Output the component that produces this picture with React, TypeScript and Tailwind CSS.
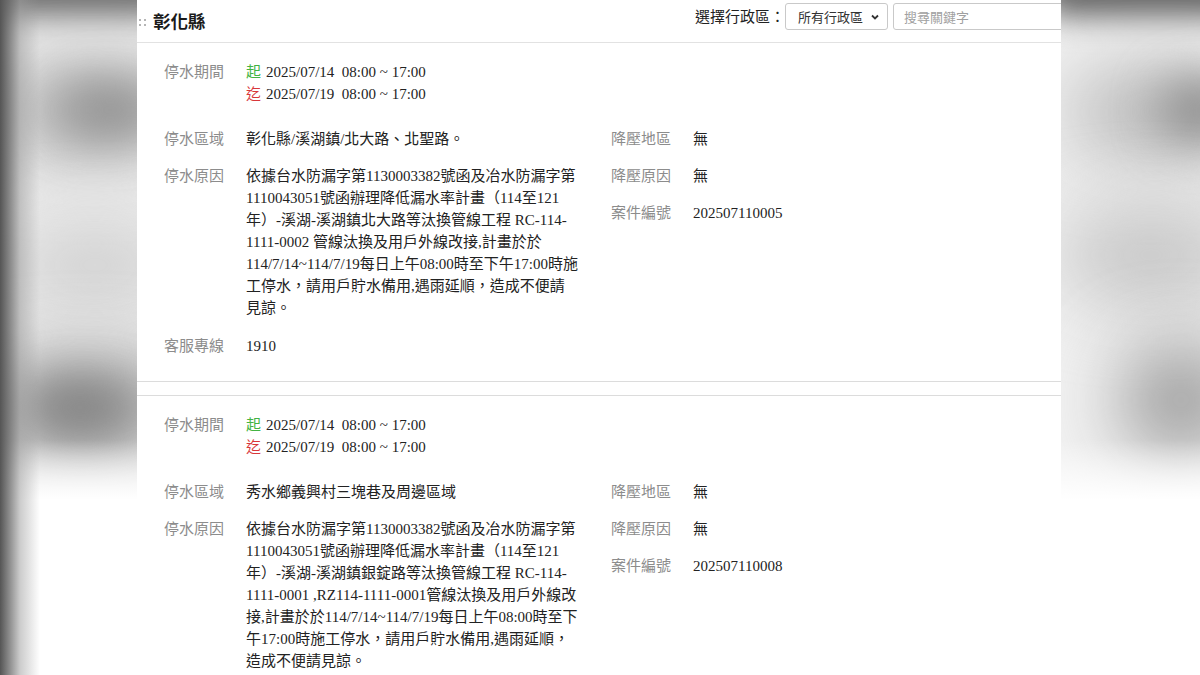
import React from "react";

type Notice = {
  area: string;
  reason: string[];
  hotline?: string;
  caseNo: string;
};

const notices: Notice[] = [
  {
    area: "彰化縣/溪湖鎮/北大路、北聖路。",
    reason: [
      "依據台水防漏字第1130003382號函及冶水防漏字第",
      "1110043051號函辦理降低漏水率計畫（114至121",
      "年）-溪湖-溪湖鎮北大路等汰換管線工程 RC-114-",
      "1111-0002 管線汰換及用戶外線改接,計畫於於",
      "114/7/14~114/7/19每日上午08:00時至下午17:00時施",
      "工停水，請用戶貯水備用,遇雨延順，造成不便請",
      "見諒。",
    ],
    hotline: "1910",
    caseNo: "202507110005",
  },
  {
    area: "秀水鄉義興村三塊巷及周邊區域",
    reason: [
      "依據台水防漏字第1130003382號函及冶水防漏字第",
      "1110043051號函辦理降低漏水率計畫（114至121",
      "年）-溪湖-溪湖鎮銀錠路等汰換管線工程 RC-114-",
      "1111-0001 ,RZ114-1111-0001管線汰換及用戶外線改",
      "接,計畫於於114/7/14~114/7/19每日上午08:00時至下",
      "午17:00時施工停水，請用戶貯水備用,遇雨延順，",
      "造成不便請見諒。",
    ],
    caseNo: "202507110008",
  },
];

function Row({
  label,
  className = "",
  children,
}: {
  label: string;
  className?: string;
  children: React.ReactNode;
}) {
  return (
    <div className={`flex leading-[22px] ${className}`}>
      <div className="w-[82px] shrink-0 text-[#8c8c8c]">{label}</div>
      <div className="text-[#222]">{children}</div>
    </div>
  );
}

function NoticeCard({ notice, first }: { notice: Notice; first?: boolean }) {
  return (
    <section
      className={`px-[27px] pt-[18px] pb-[24px] border-b border-[#dcdcdc] ${
        first ? "" : "mt-[13px] border-t"
      }`}
    >
      <Row label="停水期間">
        <div className="whitespace-pre">
          <span className="text-[#43b343]">起</span>
          <span className="ml-[5px]">2025/07/14  08:00 ~ 17:00</span>
        </div>
        <div className="whitespace-pre">
          <span className="text-[#d8363a]">迄</span>
          <span className="ml-[5px]">2025/07/19  08:00 ~ 17:00</span>
        </div>
      </Row>

      <div className="mt-[23px] flex">
        <div className="w-[447px] shrink-0">
          <Row label="停水區域">{notice.area}</Row>
          <Row label="停水原因" className="mt-[15px]">
            {notice.reason.map((line) => (
              <div key={line} className="whitespace-nowrap">
                {line}
              </div>
            ))}
          </Row>
          {notice.hotline && (
            <Row label="客服專線" className="mt-[16px]">
              {notice.hotline}
            </Row>
          )}
        </div>
        <div className="flex-1">
          <Row label="降壓地區">無</Row>
          <Row label="降壓原因" className="mt-[15px]">
            無
          </Row>
          <Row label="案件編號" className="mt-[15px]">
            {notice.caseNo}
          </Row>
        </div>
      </div>
    </section>
  );
}

// soft grey backdrop on both sides of the page column
function SideBackdrop({ side }: { side: "left" | "right" }) {
  if (side === "left") {
    return (
      <div className="relative h-full w-[137px] shrink-0 overflow-hidden bg-[#f1f1f1]">
        <div className="absolute -left-[20px] top-[-34px] h-[50px] w-[200px] rounded-full bg-[#6a6a6a] blur-lg" />
        <div className="absolute left-[0px] top-[70px] h-[80px] w-[180px] rounded-full bg-[#a6a6a6] blur-2xl" />
        <div className="absolute left-[60px] top-[85px] h-[50px] w-[100px] rounded-full bg-[#8e8e8e] blur-xl" />
        <div className="absolute left-[10px] top-[235px] h-[60px] w-[170px] rounded-full bg-[#c2c2c2] blur-2xl" />
        <div className="absolute left-[-10px] top-[365px] h-[85px] w-[190px] rounded-full bg-[#8c8c8c] blur-2xl" />
        <div className="absolute left-[30px] top-[385px] h-[45px] w-[100px] rounded-full bg-[#7d7d7d] blur-xl" />
        <div className="absolute left-0 top-[440px] h-[60px] w-full bg-gradient-to-b from-transparent to-white" />
        <div className="absolute left-0 top-[500px] h-[175px] w-full bg-white" />
        <div className="absolute left-0 top-0 h-full w-[40px] bg-gradient-to-r from-[#555] via-[#999]/50 to-transparent" />
      </div>
    );
  }
  return (
    <div className="relative h-full flex-1 overflow-hidden bg-[#f2f2f2]">
      <div className="absolute -left-[20px] top-[-32px] h-[48px] w-[220px] rounded-full bg-[#5e5e5e] blur-lg" />
      <div className="absolute left-[10px] top-[75px] h-[75px] w-[170px] rounded-full bg-[#ababab] blur-2xl" />
      <div className="absolute left-[100px] top-[80px] h-[60px] w-[80px] rounded-full bg-[#8a8a8a] blur-xl" />
      <div className="absolute left-[0px] top-[215px] h-[80px] w-[180px] rounded-full bg-[#bdbdbd] blur-2xl" />
      <div className="absolute left-[60px] top-[350px] h-[100px] w-[120px] rounded-full bg-[#8e8e8e] blur-2xl" />
      <div className="absolute left-0 top-[440px] h-[60px] w-full bg-gradient-to-b from-transparent to-white" />
      <div className="absolute left-0 top-[500px] h-[175px] w-full bg-white" />
    </div>
  );
}

export default function App() {
  return (
    <div className="flex h-[675px] w-[1200px] overflow-hidden bg-white font-['Liberation_Serif','Noto_Sans_CJK_TC',serif] text-[15px]">
      <SideBackdrop side="left" />

      <main className="h-full w-[924px] shrink-0 overflow-hidden bg-white">
        <header className="flex h-[43px] items-center border-b border-[#e2e2e2] pl-[2px]">
          <span className="mr-[7px] grid grid-cols-2 gap-[3px] pt-[2px]">
            <span className="h-[2px] w-[2px] bg-[#b5b5b5]" />
            <span className="h-[2px] w-[2px] bg-[#b5b5b5]" />
            <span className="h-[2px] w-[2px] bg-[#b5b5b5]" />
            <span className="h-[2px] w-[2px] bg-[#b5b5b5]" />
          </span>
          <h1 className="font-['Noto_Sans_CJK_TC',sans-serif] text-[17.5px] font-bold text-[#1a1a1a]">
            彰化縣
          </h1>

          <div className="-mr-[40px] ml-auto flex items-center self-start pt-[3px] font-['Noto_Sans_CJK_TC',sans-serif]">
            <span className="text-[15px] text-[#222]">選擇行政區：</span>
            <div className="flex h-[27px] w-[103px] items-center justify-between rounded-[3px] border border-[#c9c9c9] pl-[12px] pr-[7px] text-[13px] text-[#333]">
              <span>所有行政區</span>
              <svg width="10" height="10" viewBox="0 0 10 10">
                <path d="M2 3.5 L5 6.5 L8 3.5" fill="none" stroke="#333" strokeWidth="1.8" />
              </svg>
            </div>
            <div className="ml-[5px] flex h-[27px] w-[208px] items-center rounded-[3px] border border-[#c9c9c9] pl-[10px] text-[13px] text-[#a0a0a0]">
              搜尋關鍵字
            </div>
          </div>
        </header>

        {notices.map((n, i) => (
          <NoticeCard key={n.caseNo} notice={n} first={i === 0} />
        ))}
      </main>

      <SideBackdrop side="right" />
    </div>
  );
}
